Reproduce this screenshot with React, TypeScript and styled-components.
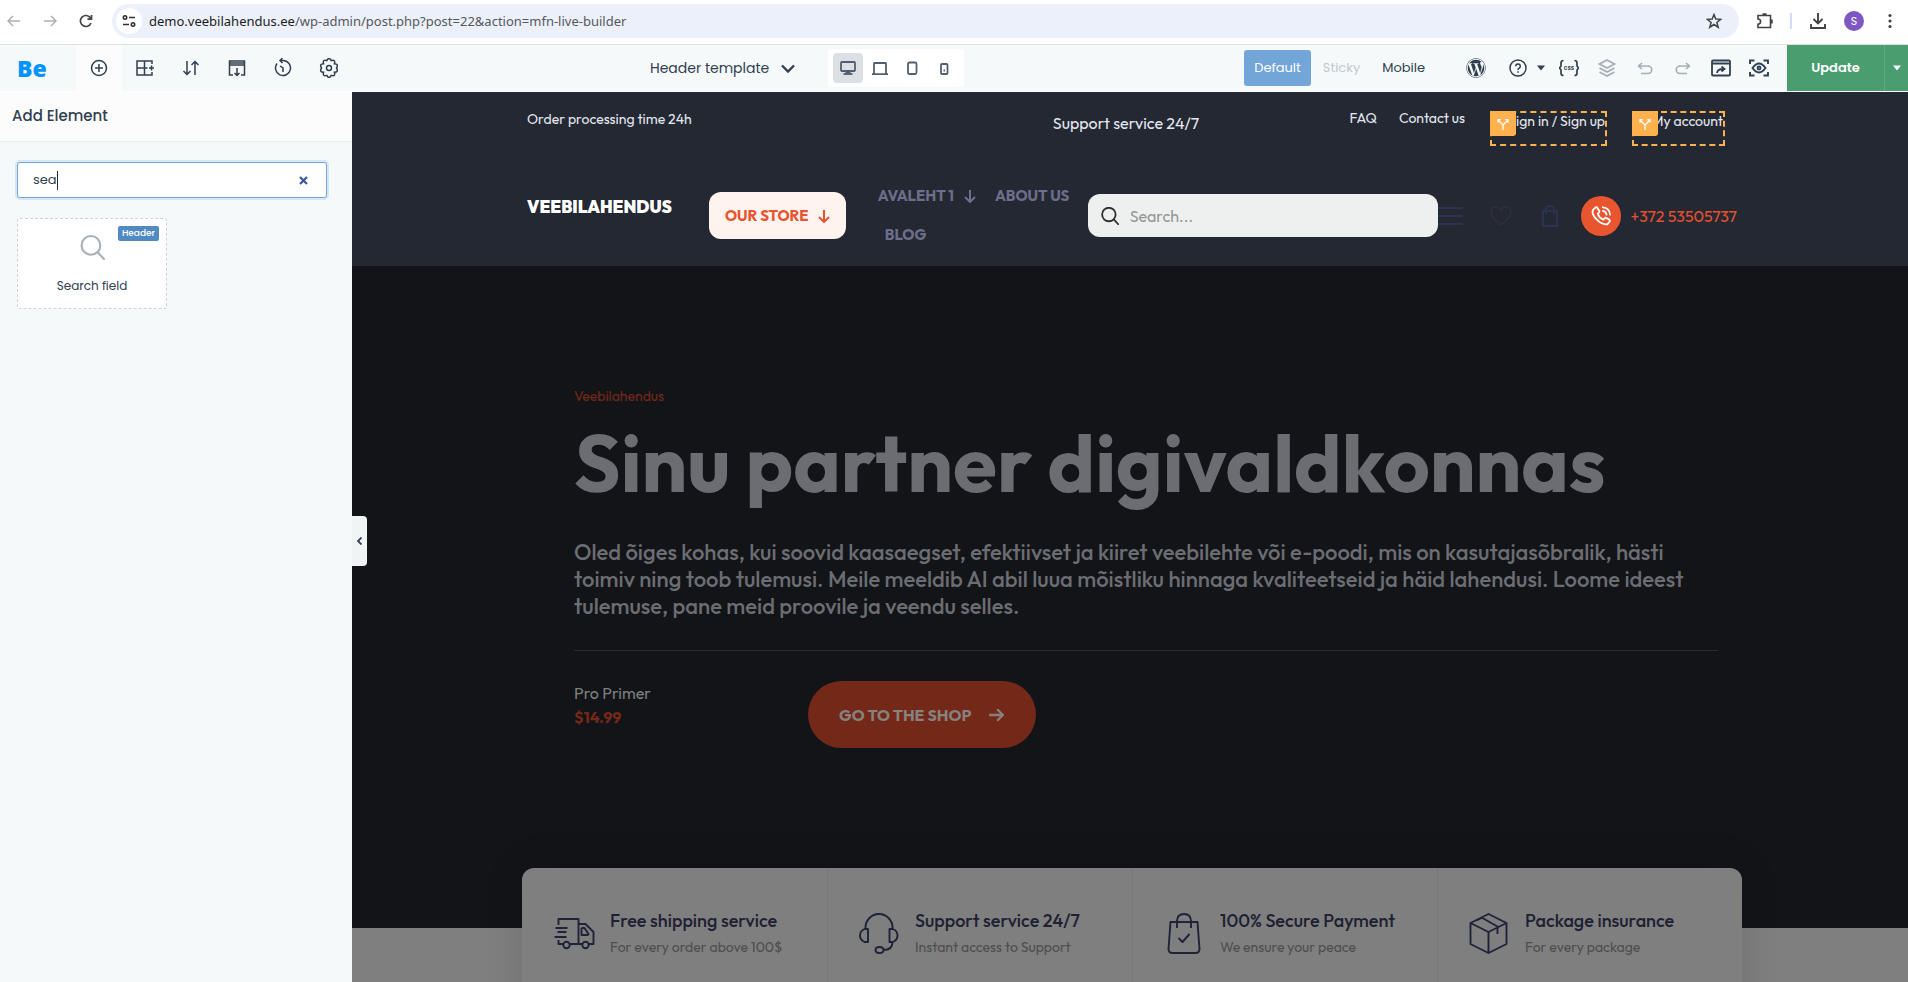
import React from "react";
import styled, { createGlobalStyle } from "styled-components";
import { FaWordpress } from "react-icons/fa";

const Global = createGlobalStyle`
  *, *::before, *::after { box-sizing: border-box; }
  body { margin: 0; background: #fff; overflow: hidden; }
  button, input, select { font: inherit; color: inherit; }
  button { border: 0; background: none; padding: 0; cursor: pointer; }
  a { color: inherit; text-decoration: none; }
  h1, h2, h3, p, ul { margin: 0; padding: 0; }
  svg { display: block; flex: none; }
`;

const uiFont = `Poppins, Inter, sans-serif`;
const siteFont = `Outfit, Lato, sans-serif`;

const Page = styled.div`
  display: flex;
  flex-direction: column;
  height: 100vh;
  font-family: ${uiFont};
  color: #304050;
`;

/* ---------- icon base ---------- */

const Stroke = styled.svg.attrs({ fill: "none", stroke: "currentColor" })``;

/* ---------- browser bar ---------- */

const BrowserBar = styled.header`
  display: flex;
  align-items: center;
  height: 45px;
  padding: 0 0 3px 4px;
  background: #fff;
  border-bottom: 1px solid #dfe1e0;
  color: #404346;
`;

const BrowserButton = styled.button<{ $dim?: boolean }>`
  display: grid;
  place-items: center;
  width: 36px;
  height: 34px;
  color: ${(p) => (p.$dim ? "#aeb0b2" : "#404346")};
`;

const NavButtons = styled.div`
  display: flex;
  width: 108px;
  margin-left: -8px;
`;

const Omnibox = styled.div`
  flex: 1;
  display: flex;
  align-items: center;
  height: 34px;
  margin-left: 8px;
  padding: 0 7px 0 4px;
  border-radius: 17px;
  background: #ecf0fa;
`;

const SiteInfo = styled.button`
  display: grid;
  place-items: center;
  width: 26px;
  height: 26px;
  border-radius: 50%;
  background: #fff;
  color: #303336;
`;

const Url = styled.span`
  flex: 1;
  padding-left: 7px;
  font: 13px/20px "Segoe UI", "Noto Sans", sans-serif;
  color: #55585c;

  b {
    font-weight: 400;
    color: #1c1d20;
  }
`;

const BrowserTools = styled.div`
  display: flex;
  align-items: center;
  margin-left: 8px;
`;

const BarDivider = styled.span`
  width: 2px;
  height: 16px;
  margin: 0 8px 0 7px;
  background: #cfdffb;
`;

const Avatar = styled.span`
  display: grid;
  place-items: center;
  width: 20px;
  height: 20px;
  border-radius: 50%;
  background: #7e57c2;
  color: #fff;
  font: 11px/20px ${uiFont};
`;

/* ---------- builder toolbar ---------- */

const Toolbar = styled.nav`
  display: flex;
  align-items: center;
  justify-content: space-between;
  height: 47px;
  background: #f5f9fa;
  border-bottom: 1px solid #fcfdfd;
`;

const ToolGroup = styled.div`
  display: flex;
  align-items: center;
  height: 46px;
`;

const MainTools = styled(ToolGroup)`
  width: 370px;
`;

const BrandLogo = styled.a`
  width: 76px;
  padding-left: 17px;
  font: 800 23px/46px "Open Sans", sans-serif;
  color: #0094ff;
`;

const ToolButton = styled.button<{ $active?: boolean; $faded?: boolean; $width?: number }>`
  display: grid;
  place-items: center;
  width: ${(p) => p.$width ?? 46}px;
  height: 46px;
  background: ${(p) => (p.$active ? "#fcfcfc" : "transparent")};
  color: #304050;
  opacity: ${(p) => (p.$faded ? 0.4 : 1)};
`;

const TemplatePicker = styled.button`
  display: flex;
  align-items: center;
  gap: 12px;
  margin-right: 33px;
  font-size: 14px;
  line-height: 24px;
`;

const Devices = styled.div`
  display: flex;
  align-items: center;
  gap: 2px;
  height: 38px;
  padding: 0 5px;
  border-radius: 4px;
  background: #fff;
`;

const DeviceButton = styled.button<{ $active?: boolean }>`
  display: grid;
  place-items: center;
  width: 30px;
  height: 30px;
  border-radius: 4px;
  background: ${(p) => (p.$active ? "#dcdfe4" : "transparent")};
  color: #506070;
`;

const StateTab = styled.button<{ $state?: "active" | "off" }>`
  height: 36px;
  padding: 0 10px;
  border-radius: 3px;
  font-size: 13px;
  line-height: 20px;
  background: ${(p) => (p.$state === "active" ? "#72a5d8" : "transparent")};
  color: ${(p) => (p.$state === "active" ? "#fff" : p.$state === "off" ? "#c2c8cd" : "#304050")};
`;

const StateTabs = styled.div`
  display: flex;
  gap: 2px;
  margin-right: 18px;
`;

const HelpCaret = styled.span`
  margin-right: 5px;
`;

const UpdateButton = styled.button`
  width: 98px;
  height: 46px;
  margin-left: 9px;
  background: #4a9d6f;
  border-right: 1px solid #5fab80;
  color: #fff;
  font-size: 13px;
  font-weight: 600;
`;

const UpdateMore = styled.button`
  display: grid;
  place-items: center;
  width: 23px;
  height: 46px;
  background: #4a9d6f;
  color: #fff;
`;

/* ---------- sidebar ---------- */

const Workspace = styled.div`
  flex: 1;
  display: flex;
  min-height: 0;
`;

const Sidebar = styled.aside`
  position: relative;
  flex: none;
  width: 352px;
  background: #f5f9fa;
`;

const SidebarTitle = styled.h2`
  height: 50px;
  padding-left: 12px;
  background: #fcfcfc;
  border-bottom: 1px solid #eceff1;
  font-size: 15px;
  font-weight: 500;
  line-height: 48px;
`;

const SidebarBody = styled.div`
  padding: 20px 25px 0 17px;
`;

const ElementSearch = styled.div`
  display: flex;
  align-items: center;
  height: 36px;
  padding: 0 16px 0 15px;
  border: 1px solid #72a5d8;
  border-radius: 3px;
  box-shadow: 0 0 0 2px #d7e6f4;
  background: #fff;

  input {
    field-sizing: content;
    min-width: 1px;
    border: 0;
    outline: 0;
    padding: 0;
    background: none;
    caret-color: transparent;
    font-size: 13px;
    line-height: 20px;
  }
`;

const Typed = styled.label`
  flex: 1;
  display: flex;
  align-items: center;
`;

const TextCursor = styled.span`
  width: 1px;
  height: 19px;
  background: #202a33;
`;

const ClearButton = styled.button`
  display: grid;
  place-items: center;
  width: 14px;
  height: 14px;
  color: #36599c;
`;

const ElementCard = styled.button`
  position: relative;
  display: flex;
  flex-direction: column;
  align-items: center;
  width: 150px;
  height: 91px;
  margin-top: 20px;
  padding-top: 16px;
  border: 1px dashed #d0d3d5;
  border-radius: 3px;
  background: #fff;
  font-size: 12px;
  line-height: 18px;
  gap: 17px;

  svg {
    color: #a9b0b6;
  }
`;

const CardTag = styled.span`
  position: absolute;
  top: 7px;
  right: 7px;
  padding: 0 4px;
  border-radius: 2px;
  background: #5189c2;
  color: #fff;
  font-size: 9px;
  font-weight: 500;
  line-height: 15px;
`;

const CollapseTab = styled.button`
  position: absolute;
  left: 100%;
  top: 424px;
  display: grid;
  place-items: center;
  width: 15px;
  height: 50px;
  border-radius: 0 4px 4px 0;
  background: #f0f4f5;
  z-index: 1;
`;

/* ---------- site preview ---------- */

const Preview = styled.main`
  flex: 1;
  min-width: 0;
  overflow: hidden;
  padding-left: 4px;
  background: linear-gradient(#242832 174px, #131418 174px, #131418 836px, #7f7f7f 836px);
  font-family: ${siteFont};
`;

const Container = styled.div`
  max-width: 1220px;
  margin: 0 auto;
`;

const SiteHeader = styled(Container)`
  height: 174px;
  padding: 0 5px;
`;

const TopRow = styled.div`
  display: grid;
  grid-template-columns: 1fr auto 1fr;
  align-items: start;
  height: 100px;
  padding: 16px 12px 0 0;
  color: #e3e7f0;
  font-size: 14px;
  line-height: 22px;
`;

const Support = styled.p`
  padding: 3px 0 0;
  font-size: 16px;
  line-height: 24px;
`;

const TopLinks = styled.ul`
  display: flex;
  justify-content: flex-end;
  list-style: none;
  line-height: 20px;

  li + li { margin-left: 25px; }
  li:nth-child(2) { margin-left: 22px; }
`;

const ConditionalLink = styled.li<{ $width: number }>`
  position: relative;
  display: flex;
  justify-content: flex-end;
  align-self: flex-start;
  width: ${(p) => p.$width}px;
  height: 35px;
  margin-top: 3px;
  border: 2px dashed #ffb14e;
  line-height: 17px;
  white-space: nowrap;
`;

const ConditionTag = styled.span`
  position: absolute;
  left: -2px;
  top: -2px;
  display: grid;
  place-items: center;
  width: 26px;
  height: 25px;
  border-radius: 0 0 3px 0;
  background: #ffb14e;
  color: #fff;
`;

const MainRow = styled.div`
  display: flex;
  align-items: flex-start;
`;

const SiteLogo = styled.a`
  width: 182px;
  padding-top: 5px;
  color: #fff;
  font-size: 17px;
  font-weight: 900;
  line-height: 20px;
`;

const StoreButton = styled.button`
  display: flex;
  align-items: center;
  justify-content: space-between;
  width: 137px;
  height: 47px;
  padding: 0 15px 0 16px;
  border-radius: 12px;
  background: #fff3ed;
  color: #e8532f;
  font-size: 15px;
  font-weight: 700;
`;

const Menu = styled.ul`
  display: flex;
  flex-wrap: wrap;
  width: 216px;
  margin: -8px 0 0 26px;
  list-style: none;
  color: #6e6e8c;
  font-size: 15px;
  font-weight: 700;
  line-height: 24px;
  row-gap: 15px;

  a {
    display: flex;
    align-items: center;
    gap: 9px;
    padding: 0 12px 0 6px;
  }

  li + li a { padding: 0 0 0 6px; }
  li:last-child a { padding-left: 13px; }
`;

const SiteSearch = styled.label`
  display: flex;
  align-items: center;
  gap: 11px;
  width: 350px;
  height: 43px;
  margin-top: 2px;
  padding: 0 13px;
  border-radius: 12px;
  background: #eef0ef;
  color: #2d2f33;

  input {
    flex: 1;
    min-width: 0;
    border: 0;
    outline: 0;
    padding: 0;
    background: none;
    font-size: 16px;
    line-height: 24px;
  }
  input::placeholder { color: #979797; opacity: 1; }
`;

const HeaderIcons = styled.div`
  display: flex;
  align-items: center;
  height: 47px;
  color: #2c3350;

  button + button { margin-left: 27px; }
  button:last-child { margin-left: 29px; }
`;

const PhoneLink = styled.a`
  display: flex;
  align-items: center;
  gap: 10px;
  height: 47px;
  margin-left: 22px;
  color: #e4512f;
  font-size: 16px;
  line-height: 24px;
  white-space: nowrap;
`;

const PhoneBadge = styled.span`
  display: grid;
  place-items: center;
  width: 40px;
  height: 40px;
  border-radius: 50%;
  background: #e8552f;
  color: #fff;
`;

const Hero = styled(Container)`
  height: 602px;
  padding: 118px 24px 0 52px;
`;

const Eyebrow = styled.p`
  color: #742817;
  font-size: 14px;
  line-height: 24px;
`;

const HeroTitle = styled.h1`
  padding-top: 10px;
  color: #6b6d72;
  font-size: 80px;
  font-weight: 700;
  line-height: 90px;
`;

const HeroText = styled.p`
  margin-top: 31px;
  padding-bottom: 30px;
  border-bottom: 1px solid #2b2c30;
  color: #6b6d72;
  font-size: 22px;
  font-weight: 500;
  line-height: 27px;
`;

const HeroActions = styled.div`
  display: flex;
  gap: 158px;
  margin-top: 30px;
`;

const Product = styled.p`
  color: #7e7f80;
  font-size: 16px;
  line-height: 24px;
  white-space: nowrap;

  strong {
    display: block;
    color: #742817;
  }
`;

const ShopButton = styled.button`
  display: flex;
  align-items: center;
  justify-content: space-between;
  width: 228px;
  height: 67px;
  padding: 0 32px 0 31px;
  border-radius: 34px;
  background: #742817;
  color: #87817f;
  font-size: 16px;
  font-weight: 700;
`;

const ProductColumn = styled.div`
  width: 76px;
`;

const Features = styled(Container)`
  display: grid;
  grid-template-columns: repeat(4, 1fr);
  height: 180px;
  border-radius: 12px;
  background: #7f7f7f;
  box-shadow: 0 0 40px rgba(0, 0, 0, 0.12);
`;

const Feature = styled.section`
  display: flex;
  gap: 15px;
  padding: 41px 0 0 31px;
  color: #20223a;

  & + & {
    padding-left: 30px;
    border-left: 1px solid #777;
  }

  h3 {
    color: #1e2132;
    font-size: 18px;
    font-weight: 500;
    line-height: 24px;
  }
  p {
    padding-top: 4px;
    color: #4e4e4e;
    font-size: 14px;
    line-height: 20px;
  }
  svg { margin-top: 4px; }
`;

/* ---------- drawings ---------- */

const Arrow = ({ size = 14, turn = 0, w = 2 }: { size?: number; turn?: number; w?: number }) => (
  <Stroke width={size} height={size} viewBox="0 0 14 14" strokeWidth={w}>
    <g transform={`rotate(${turn} 7 7)`}>
      <path d="M1 7h12M8 2l5 5-5 5" />
    </g>
  </Stroke>
);

const Caret = () => (
  <svg width="8" height="6" viewBox="0 0 8 6" fill="currentColor">
    <path d="M0 .5h8L4 5.500z" />
  </svg>
);

const Lens = ({ size, w }: { size: number; w: number }) => (
  <Stroke width={size} height={size} viewBox="0 0 24 24" strokeWidth={w} strokeLinecap="round">
    <circle cx="10.500" cy="10" r="9" />
    <path d="m17 16.500 6 6.500" />
  </Stroke>
);

const Fork = () => (
  <Stroke width="12" height="12" viewBox="0 0 12 12" strokeWidth="1.300">
    <path d="M6 12V7L1.500 2.500M6 7l4.500-4.500M1 4.500V1.700h2.800M8.200 1.700H11v2.800" />
  </Stroke>
);

const tools: { label: string; drawing: React.ReactNode }[] = [
  {
    label: "Add element",
    drawing: (
      <>
        <circle cx="10" cy="10" r="7.500" />
        <path d="M10 6v8M6 10h8" />
      </>
    ),
  },
  {
    label: "Sections",
    drawing: <path d="M17 6V3H2v14h15v-3M9.500 3v14M2 10h10.500M16.500 7.500v5M14 10h5" />,
  },
  {
    label: "Navigator",
    drawing: <path d="M6 3v13.500M2.500 13 6 16.500 9.500 13M14 17V3.500M10.500 7 14 3.500 17.500 7" />,
  },
  {
    label: "Export",
    drawing: <path d="M6 17H2.500V3h15v14H14M2.500 7h15M2.500 5h15M10 10v7.500M7.500 15l2.500 2.500 2.500-2.500" />,
  },
  {
    label: "History",
    drawing: <path d="M4 5.500A7.500 7.500 0 1 0 10 2.500H7M9.500 0 7 2.500 9.500 5M7 8l3 2v4" />,
  },
  {
    label: "Settings",
    drawing: (
      <>
        <circle cx="10" cy="10" r="2.500" />
        <path d="M7.800 2.600Q10-1.600 12.200 2.600 16.700 1.200 15.400 5.700 19.900 6 17.500 10 19.900 14 15.400 14.300 16.700 18.800 12.200 17.400 10 21.600 7.800 17.400 3.300 18.800 4.600 14.300.1 14 2.500 10 .1 6 4.600 5.700 3.300 1.200 7.800 2.600z" />
      </>
    ),
  },
];

const devices = [
  {
    label: "Desktop",
    drawing: (
      <>
        <rect x="1" y="2" width="14" height="9" rx="1" />
        <path d="M8 11v3" strokeWidth="5" />
        <path d="M3.500 14h9" />
      </>
    ),
  },
  { label: "Laptop", drawing: <path d="M2 14V3.500Q2 3 2.500 3h11Q14 3 14 3.500V14M0 14.200h16" /> },
  { label: "Tablet", drawing: <rect x="4" y="2.500" width="8.500" height="11.500" rx="1.500" /> },
  {
    label: "Phone",
    drawing: (
      <>
        <rect x="5" y="4" width="6.500" height="10" rx="1" />
        <path d="M7.500 10.500h1.500" />
      </>
    ),
  },
];

const features = [
  {
    title: "Free shipping service",
    note: "For every order above 100$",
    drawing: (
      <>
        <path d="M5 12V6h20v25H16.500M25 11h7l8 8v12h-4.500M28 15v7h7M28 15h3l4 6v1M2 15h12M4 19h9M1 24h12M5 27v4h4.500M25 31h3.500" />
        <circle cx="13" cy="32" r="3.200" />
        <circle cx="32" cy="32" r="3.200" />
      </>
    ),
  },
  {
    title: "Support service 24/7",
    note: "Instant access to Support",
    drawing: (
      <path d="M7 16V14.500a13.500 13.500 0 0 1 27 0V16M9.500 16H6Q1.500 18 1.500 22.500T6 29h3.500zM31 16h3.500Q39 18 39 22.500T34.500 29H31zM34 29q0 8-9 8M25 37q0-3-4-3t-4 3 4 3 4-3" />
    ),
  },
  {
    title: "100% Secure Payment",
    note: "We ensure your peace",
    drawing: (
      <path d="M7 9h27l2 27q0 4-4 4H9q-4 0-4-4zM13.500 15V8q0-7 7-7t7 7v7M15 25l4 4 7-8" />
    ),
  },
  {
    title: "Package insurance",
    note: "For every package",
    drawing: <path d="M20 1 38 10v21L20 40 2 31V10zM2 10l18 9 18-9M20 19v21M13 4.500 29 13.500V21M8 7.500 13 5" />,
  },
];

export default function App() {
  return (
    <Page>
      <Global />
      <BrowserBar>
        <NavButtons>
          <BrowserButton $dim aria-label="Back">
            <Arrow turn={180} w={1.5} />
          </BrowserButton>
          <BrowserButton $dim aria-label="Forward">
            <Arrow w={1.5} />
          </BrowserButton>
          <BrowserButton aria-label="Reload">
            <Stroke width="14" height="14" viewBox="0 0 14 14" strokeWidth="1.700">
              <path d="M12 9A5.500 5.500 0 1 1 11.500 4M12.500 1v4.200H8.500" />
            </Stroke>
          </BrowserButton>
        </NavButtons>
        <Omnibox>
          <SiteInfo aria-label="Site information">
            <Stroke width="14" height="14" viewBox="0 0 14 14" strokeWidth="1.600">
              <circle cx="3" cy="3.500" r="1.700" />
              <circle cx="11" cy="10.500" r="1.700" />
              <path d="M7 3.500h6M1 10.500h6" />
            </Stroke>
          </SiteInfo>
          <Url>
            <b>demo.veebilahendus.ee</b>/wp-admin/post.php?post=22&amp;action=mfn-live-builder
          </Url>
          <BrowserButton aria-label="Bookmark">
            <Stroke width="16" height="16" viewBox="0 0 16 16" strokeWidth="1.500">
              <path d="m8 1.500 1.800 4.500 4.900.3-3.800 3.100 1.300 4.800L8 11.500l-4.200 2.700 1.300-4.800L1.300 6.300l4.900-.3z" />
            </Stroke>
          </BrowserButton>
        </Omnibox>
        <BrowserTools>
          <BrowserButton aria-label="Extensions">
            <Stroke width="18" height="18" viewBox="0 0 18 18" strokeWidth="1.600">
              <path d="M2 3.500h12.500v12H2v-3.300a2.600 2.600 0 0 0 0-5.200z" />
              <path d="M6.500 2.500h4M15.500 7.500v4" strokeWidth="2.500" />
            </Stroke>
          </BrowserButton>
          <BarDivider />
          <BrowserButton aria-label="Downloads">
            <Stroke width="18" height="18" viewBox="0 0 18 18" strokeWidth="1.900">
              <path d="M9 1v10M4.500 7 9 11.500 13.500 7M2 12v4h14v-4" />
            </Stroke>
          </BrowserButton>
          <BrowserButton aria-label="Profile">
            <Avatar>S</Avatar>
          </BrowserButton>
          <BrowserButton aria-label="Menu">
            <svg width="4" height="16" viewBox="0 0 4 16" fill="currentColor">
              <circle cx="2" cy="2.500" r="1.600" />
              <circle cx="2" cy="8" r="1.600" />
              <circle cx="2" cy="13.500" r="1.600" />
            </svg>
          </BrowserButton>
        </BrowserTools>
      </BrowserBar>

      <Toolbar>
        <MainTools>
          <BrandLogo href="#">Be</BrandLogo>
          {tools.map((t, i) => (
            <ToolButton key={t.label} aria-label={t.label} $active={i === 0}>
              <Stroke width="20" height="20" viewBox="0 0 20 20" strokeWidth="1.500">
                {t.drawing}
              </Stroke>
            </ToolButton>
          ))}
        </MainTools>

        <ToolGroup>
          <TemplatePicker>
            Header template
            <Stroke width="14" height="9" viewBox="0 0 14 9" strokeWidth="2.400">
              <path d="m1 1.500 6 6 6-6" />
            </Stroke>
          </TemplatePicker>
          <Devices>
            {devices.map((d, i) => (
              <DeviceButton key={d.label} aria-label={d.label} $active={i === 0}>
                <Stroke width="16" height="16" viewBox="0 0 16 16" strokeWidth="1.800">
                  {d.drawing}
                </Stroke>
              </DeviceButton>
            ))}
          </Devices>
        </ToolGroup>

        <ToolGroup>
          <StateTabs>
            <StateTab $state="active">Default</StateTab>
            <StateTab $state="off">Sticky</StateTab>
            <StateTab>Mobile</StateTab>
          </StateTabs>
          <ToolButton $width={46} aria-label="WordPress">
            <FaWordpress size={20} />
          </ToolButton>
          <ToolButton $width={38} aria-label="Help">
            <Stroke width="20" height="20" viewBox="0 0 20 20" strokeWidth="1.500">
              <circle cx="10" cy="10" r="8" />
              <path d="M7.700 8.200a2.300 2.300 0 1 1 3.500 2q-1.200.7-1.200 1.800M10 13.300v1.500" />
            </Stroke>
          </ToolButton>
          <HelpCaret>
            <Caret />
          </HelpCaret>
          <ToolButton $width={38} aria-label="Custom CSS">
            <svg width="20" height="20" viewBox="0 0 20 20" fill="none" stroke="currentColor" strokeWidth="1.700">
              <path d="M4.500 2.500Q2 2.500 2 5v3L.5 10 2 12v3q0 2.500 2.500 2.500M15.500 2.500Q18 2.500 18 5v3l1.500 2-1.500 2v3q0 2.500-2.500 2.500" />
              <text x="10" y="12" textAnchor="middle" fontFamily="Inter, sans-serif" fontSize="6" fontWeight="700" fill="currentColor" stroke="none">
                css
              </text>
            </svg>
          </ToolButton>
          <ToolButton $width={38} $faded aria-label="Layers">
            <Stroke width="20" height="20" viewBox="0 0 20 20" strokeWidth="1.800">
              <path d="m10 2 7.500 4L10 10 2.500 6zM2.500 10l7.500 4 7.500-4M2.500 14l7.500 4 7.500-4" />
            </Stroke>
          </ToolButton>
          <ToolButton $width={38} $faded aria-label="Undo">
            <Stroke width="18" height="18" viewBox="0 0 18 18" strokeWidth="1.600">
              <path d="M6 4 2.500 7 6 10M2.500 7h9.500a3.700 3.700 0 0 1 0 7.500H5" />
            </Stroke>
          </ToolButton>
          <ToolButton $width={38} $faded aria-label="Redo">
            <Stroke width="18" height="18" viewBox="0 0 18 18" strokeWidth="1.600">
              <path d="m12 4 3.500 3-3.500 3M15.500 7H6a3.700 3.700 0 0 0 0 7.500h7" />
            </Stroke>
          </ToolButton>
          <ToolButton $width={38} aria-label="Preview in new window">
            <Stroke width="20" height="20" viewBox="0 0 20 20" strokeWidth="1.800">
              <rect x="1" y="2.500" width="18" height="15" rx="1" />
              <path d="M1 5.500h18M6 15q.5-4 6-4M10.500 8.500l3 2.500-3 2.500" />
            </Stroke>
          </ToolButton>
          <ToolButton $width={38} aria-label="Live preview">
            <Stroke width="20" height="20" viewBox="0 0 20 20" strokeWidth="1.900">
              <path d="M1 6V2.500h4.500M14.500 2.500H19V6M19 14v3.500h-4.500M5.500 17.500H1V14M3.500 10q6.500-9 13 0-6.500 9-13 0z" />
              <circle cx="10" cy="10" r="1.500" />
            </Stroke>
          </ToolButton>
          <UpdateButton>Update</UpdateButton>
          <UpdateMore aria-label="More update options">
            <Caret />
          </UpdateMore>
        </ToolGroup>
      </Toolbar>

      <Workspace>
        <Sidebar>
          <SidebarTitle>Add Element</SidebarTitle>
          <SidebarBody>
            <ElementSearch>
              <Typed>
                <input type="text" defaultValue="sea" aria-label="Search elements" />
                <TextCursor />
              </Typed>
              <ClearButton aria-label="Clear search">
                <Stroke width="9" height="9" viewBox="0 0 9 9" strokeWidth="2.200">
                  <path d="m1 1 7 7M8 1 1 8" />
                </Stroke>
              </ClearButton>
            </ElementSearch>
            <ElementCard>
              <CardTag>Header</CardTag>
              <Lens size={25} w={2} />
              Search field
            </ElementCard>
          </SidebarBody>
          <CollapseTab aria-label="Collapse panel">
            <Stroke width="5" height="8" viewBox="0 0 5 8" strokeWidth="1.800">
              <path d="M4.500.5 1 4l3.500 3.500" />
            </Stroke>
          </CollapseTab>
        </Sidebar>

        <Preview>
          <SiteHeader as="header">
            <TopRow>
              <p>Order processing time 24h</p>
              <Support>Support service 24/7</Support>
              <TopLinks>
                <li>
                  <a href="#">FAQ</a>
                </li>
                <li>
                  <a href="#">Contact us</a>
                </li>
                <ConditionalLink $width={117}>
                  <a href="#">Sign in / Sign up</a>
                  <ConditionTag>
                    <Fork />
                  </ConditionTag>
                </ConditionalLink>
                <ConditionalLink $width={93}>
                  <a href="#">My account</a>
                  <ConditionTag>
                    <Fork />
                  </ConditionTag>
                </ConditionalLink>
              </TopLinks>
            </TopRow>
            <MainRow>
              <SiteLogo href="#">VEEBILAHENDUS</SiteLogo>
              <StoreButton>
                OUR STORE
                <Arrow turn={90} />
              </StoreButton>
              <Menu>
                <li>
                  <a href="#">
                    AVALEHT 1
                    <Arrow turn={90} />
                  </a>
                </li>
                <li>
                  <a href="#">ABOUT US</a>
                </li>
                <li>
                  <a href="#">BLOG</a>
                </li>
              </Menu>
              <SiteSearch>
                <Lens size={18} w={2.4} />
                <input type="text" placeholder="Search..." aria-label="Search" />
              </SiteSearch>
              <HeaderIcons>
                <button aria-label="Menu">
                  <Stroke width="25" height="18" viewBox="0 0 25 18" strokeWidth="2">
                    <path d="M0 1h25M0 9h25M0 17h25" />
                  </Stroke>
                </button>
                <button aria-label="Wishlist">
                  <Stroke width="22" height="20" viewBox="0 0 22 20" strokeWidth="1.600" color="#2f3034">
                    <path d="M11 19Q1 11 1 6.500 1 1 6 1q3.500 0 5 3.500Q12.500 1 16 1q5 0 5 5.500Q21 11 11 19z" />
                  </Stroke>
                </button>
                <button aria-label="Cart">
                  <Stroke width="18" height="22" viewBox="0 0 18 22" strokeWidth="2">
                    <path d="M2 6h14v15H2zM5 9V5q0-4 4-4t4 4v4" />
                  </Stroke>
                </button>
              </HeaderIcons>
              <PhoneLink href="#">
                <PhoneBadge>
                  <Stroke width="22" height="22" viewBox="0 0 24 24" strokeWidth="2" strokeLinejoin="round" strokeLinecap="round">
                    <path d="M6.500 2.500 3.500 5Q1 9 7 15.500T19 21l2.500-3q.5-1-.5-2l-3.500-2q-1-.3-1.700.5L14.500 16Q10 14 8.500 9.500l1.200-1.200q.8-.8.4-1.800L8 3Q7.500 2 6.500 2.500z" />
                    <path d="M14 2.500q7 .5 8 8M14 6.500q3.500.5 4 4" />
                  </Stroke>
                </PhoneBadge>
                +372 53505737
              </PhoneLink>
            </MainRow>
          </SiteHeader>

          <Hero as="section">
            <Eyebrow>Veebilahendus</Eyebrow>
            <HeroTitle>Sinu partner digivaldkonnas</HeroTitle>
            <HeroText>
              Oled õiges kohas, kui soovid kaasaegset, efektiivset ja kiiret veebilehte või e-poodi, mis on
              kasutajasõbralik, hästi toimiv ning toob tulemusi. Meile meeldib AI abil luua mõistliku hinnaga
              kvaliteetseid ja häid lahendusi. Loome ideest tulemuse, pane meid proovile ja veendu selles.
            </HeroText>
            <HeroActions>
              <ProductColumn>
                <Product>
                  Pro Primer
                  <strong>$14.99</strong>
                </Product>
              </ProductColumn>
              <ShopButton>
                GO TO THE SHOP
                <Arrow size={16} />
              </ShopButton>
            </HeroActions>
          </Hero>

          <Features>
            {features.map((f) => (
              <Feature key={f.title}>
                <Stroke width="42" height="41" viewBox="0 0 41 41" strokeWidth="1.900" strokeLinejoin="round">
                  {f.drawing}
                </Stroke>
                <div>
                  <h3>{f.title}</h3>
                  <p>{f.note}</p>
                </div>
              </Feature>
            ))}
          </Features>
        </Preview>
      </Workspace>
    </Page>
  );
}
